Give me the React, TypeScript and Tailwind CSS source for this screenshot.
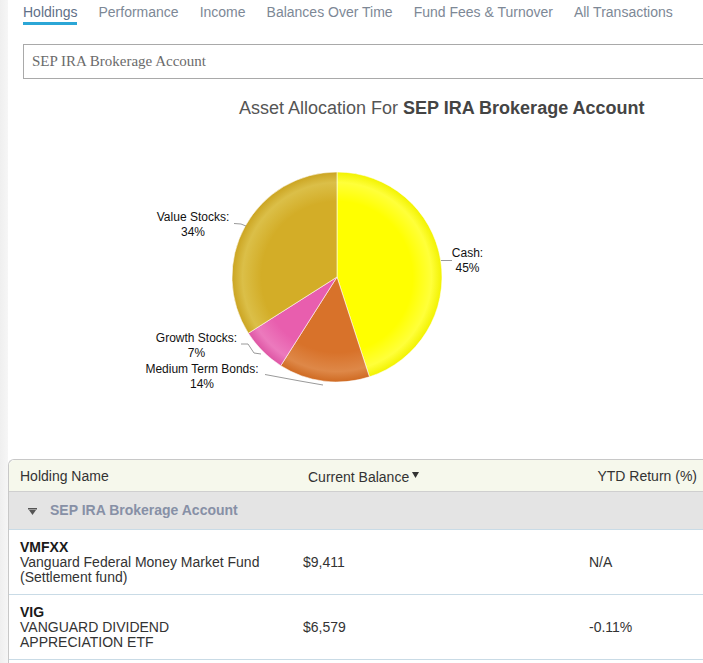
import React from "react";

const tabs = ["Holdings", "Performance", "Income", "Balances Over Time", "Fund Fees & Turnover", "All Transactions"];

function Grad({ id, base, light, dark }: { id: string; base: string; light: string; dark: string }) {
  return (
    <radialGradient id={id} cx="337" cy="277" r="105" gradientUnits="userSpaceOnUse">
      <stop offset="0" stopColor={base} />
      <stop offset="0.72" stopColor={base} />
      <stop offset="0.9" stopColor={light} />
      <stop offset="1" stopColor={dark} />
    </radialGradient>
  );
}

function Pie() {
  return (
    <svg width="695" height="340" viewBox="8 119 695 340" className="block">
      <defs>
        <Grad id="gCash" base="#ffff00" light="#ffff3a" dark="#f2f200" />
        <Grad id="gBond" base="#d8722a" light="#de8848" dark="#cf6a22" />
        <Grad id="gGrow" base="#e85eae" light="#ec7abd" dark="#de55a4" />
        <Grad id="gVal" base="#d3ad27" light="#dbbf48" dark="#cba421" />
      </defs>
      <g stroke="#ffffff" strokeWidth="0.8" strokeOpacity="0.7">
        <path d="M337,277 L337,172 A105,105 0 0 1 369.45,376.86 Z" fill="url(#gCash)" />
        <path d="M337,277 L369.45,376.86 A105,105 0 0 1 280.74,365.65 Z" fill="url(#gBond)" />
        <path d="M337,277 L280.74,365.65 A105,105 0 0 1 248.35,333.26 Z" fill="url(#gGrow)" />
        <path d="M337,277 L248.35,333.26 A105,105 0 0 1 337,172 Z" fill="url(#gVal)" />
      </g>
      <g stroke="#9a9a9a" strokeWidth="1" fill="none">
        <path d="M234,223.5 L241,224 L246,226" />
        <path d="M441,260.5 L452,260.5" />
        <path d="M241,344 L248,344 L254,353 L261,354" />
        <path d="M265,374.5 L300,381 L323,385" />
      </g>
      <g fontFamily="'Liberation Sans', Arial, sans-serif" fontSize="12" fill="#111" textAnchor="middle">
        <text x="193" y="221">Value Stocks:</text>
        <text x="193" y="236">34%</text>
        <text x="467.5" y="257">Cash:</text>
        <text x="467.5" y="272">45%</text>
        <text x="196.5" y="342">Growth Stocks:</text>
        <text x="196.5" y="357">7%</text>
        <text x="202" y="373">Medium Term Bonds:</text>
        <text x="202" y="388">14%</text>
      </g>
    </svg>
  );
}

function GroupIcon() {
  return (
    <svg width="9" height="7" viewBox="0 0 9 7" className="block">
      <rect x="0" y="0" width="9" height="1.5" fill="#555" />
      <polygon points="1,2 8,2 4.5,7" fill="#555" />
    </svg>
  );
}

function SortIcon() {
  return (
    <svg width="7" height="6" viewBox="0 0 7 6" className="block">
      <polygon points="0,0 7,0 3.5,6" fill="#333" />
    </svg>
  );
}

export default function App() {
  return (
    <div className="flex w-[703px] min-h-[663px] overflow-hidden bg-white font-['Liberation_Sans',Arial,sans-serif]">
      <div className="w-[8px] shrink-0 bg-gradient-to-r from-[#efefef] to-[#f6f6f6]" />
      <div className="min-w-0 flex-1">
        <nav className="flex h-[25px] gap-[21px] pl-[15px]">
          {tabs.map((t, i) => (
            <div
              key={t}
              className={
                i === 0
                  ? "whitespace-nowrap border-b-[3px] border-[#2ba6d6] pt-[3px] text-[14px] leading-[19px] text-[#5f7088]"
                  : "whitespace-nowrap pt-[3px] text-[14px] leading-[19px] text-[#7d8896]"
              }
            >
              {t}
            </div>
          ))}
        </nav>
        <div className="ml-[15px] mt-[19px] flex h-[35px] w-[700px] items-center border border-[#a9a9a9] pl-[8px] font-['Liberation_Serif','Times_New_Roman',serif] text-[15px] text-[#6b6b6b]">
          SEP IRA Brokerage Account
        </div>
        <div className="h-[380px]">
          <div className="ml-[231px] whitespace-nowrap pt-[19px] text-[18px] leading-[21px] text-[#555555]">
            Asset Allocation For <span className="font-bold text-[#444444]">SEP IRA Brokerage Account</span>
          </div>
          <Pie />
        </div>
        <div className="w-[695px] rounded-tl-[6px] border-l border-t border-[#c8c8c8] text-[14px]">
          <div className="flex h-[31px] rounded-tl-[6px] bg-[#f6f8ec] text-[#333333]">
            <div className="w-[294px] shrink-0 pl-[11px] pt-[8px] leading-[16px]">Holding Name</div>
            <div className="flex w-[286px] shrink-0 items-start gap-[3px] pl-[5px] pt-[9px] leading-[16px]">
              <span>Current Balance</span>
              <span className="pt-[3px]">
                <SortIcon />
              </span>
            </div>
            <div className="min-w-0 flex-1 whitespace-nowrap pr-[6px] pt-[8px] text-right leading-[16px]">YTD Return (%)</div>
          </div>
          <div className="flex h-[38px] items-center gap-[13px] border-t border-[#cfcfcf] bg-[#e4e4e4] pl-[19px]">
            <span className="pt-[1px]">
              <GroupIcon />
            </span>
            <span className="font-bold text-[#8790a6]">SEP IRA Brokerage Account</span>
          </div>
          <div className="flex items-center border-t border-[#c9dbe6] pb-[9px] pt-[10px] leading-[15px] text-[#333333]">
            <div className="w-[294px] shrink-0 pl-[11px]">
              <div className="font-bold text-[#1a1a1a]">VMFXX</div>
              <div>Vanguard Federal Money Market Fund</div>
              <div>(Settlement fund)</div>
            </div>
            <div className="w-[286px] shrink-0">$9,411</div>
            <div className="flex-1">N/A</div>
          </div>
          <div className="flex items-center border-t border-[#c9dbe6] pb-[9px] pt-[10px] leading-[15px] text-[#333333]">
            <div className="w-[294px] shrink-0 pl-[11px]">
              <div className="font-bold text-[#1a1a1a]">VIG</div>
              <div>VANGUARD DIVIDEND</div>
              <div>APPRECIATION ETF</div>
            </div>
            <div className="w-[286px] shrink-0">$6,579</div>
            <div className="flex-1">-0.11%</div>
          </div>
          <div className="h-[4px] border-t border-[#c9dbe6]" />
        </div>
      </div>
    </div>
  );
}
